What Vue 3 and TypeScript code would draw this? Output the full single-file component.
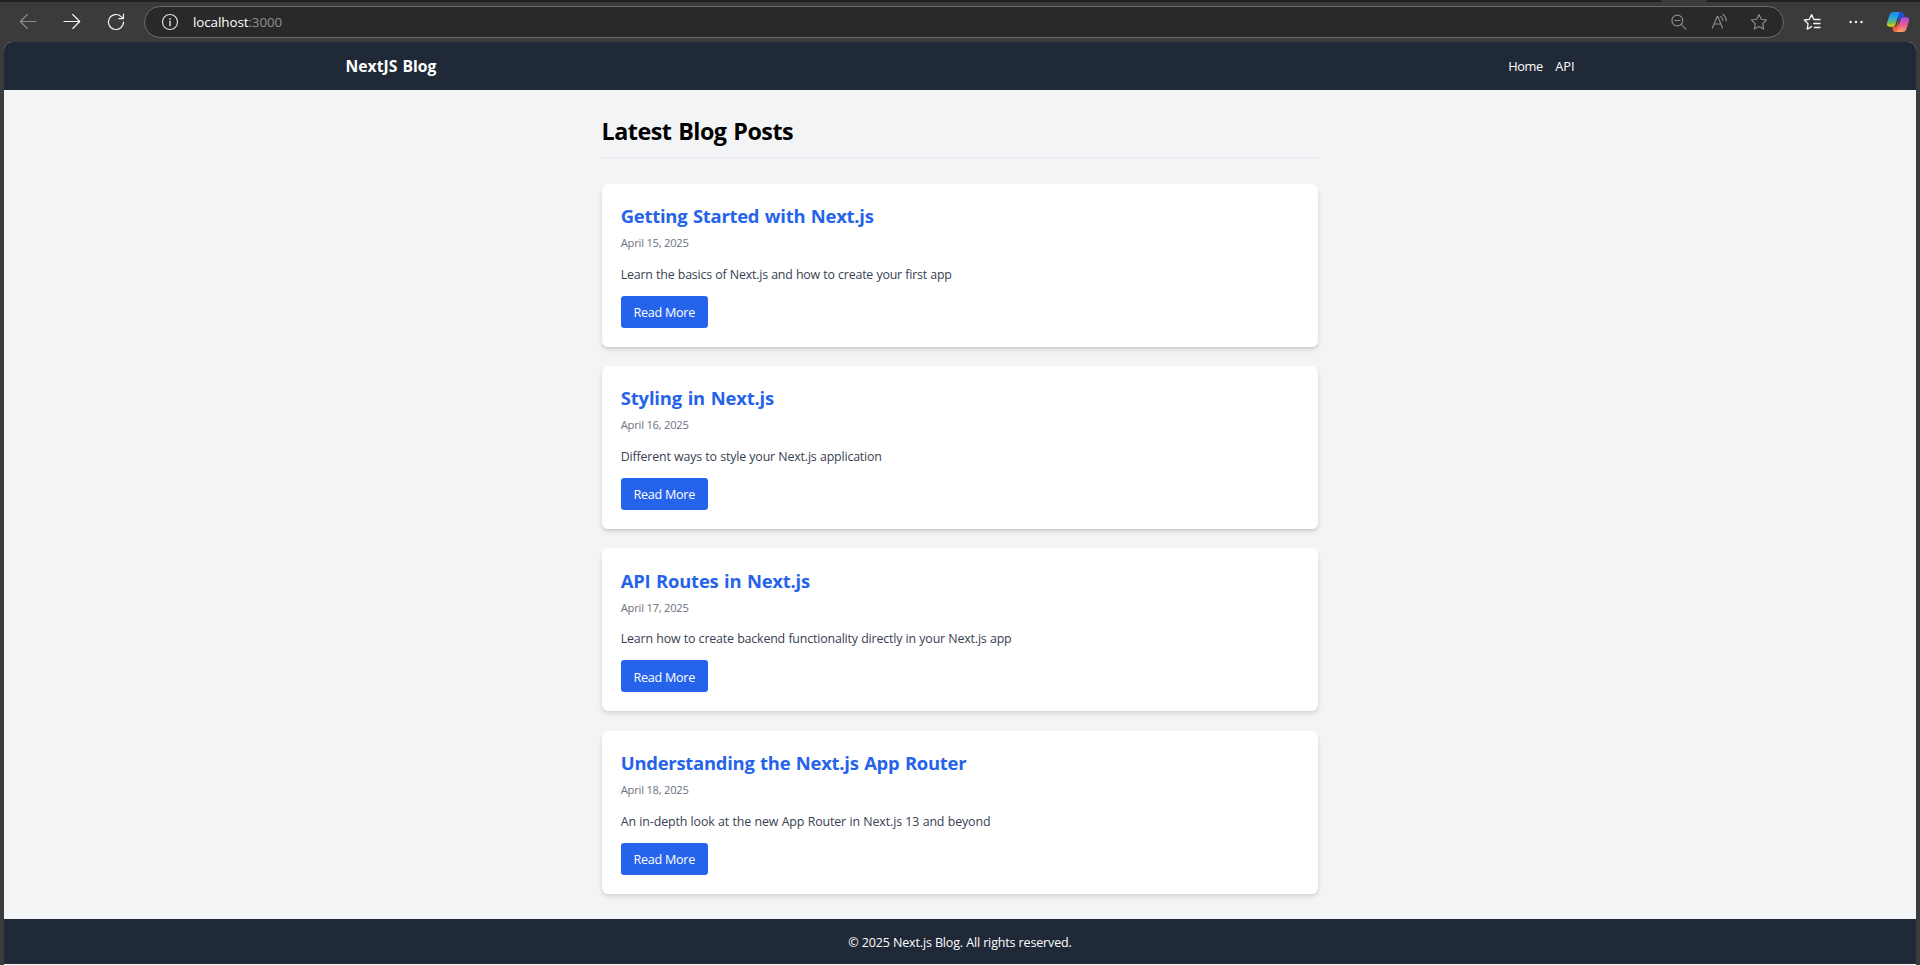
<script setup lang="ts">
interface Post {
  id: number
  title: string
  date: string
  excerpt: string
}

const posts: Post[] = [
  {
    id: 1,
    title: 'Getting Started with Next.js',
    date: 'April 15, 2025',
    excerpt: 'Learn the basics of Next.js and how to create your first app',
  },
  {
    id: 2,
    title: 'Styling in Next.js',
    date: 'April 16, 2025',
    excerpt: 'Different ways to style your Next.js application',
  },
  {
    id: 3,
    title: 'API Routes in Next.js',
    date: 'April 17, 2025',
    excerpt: 'Learn how to create backend functionality directly in your Next.js app',
  },
  {
    id: 4,
    title: 'Understanding the Next.js App Router',
    date: 'April 18, 2025',
    excerpt: 'An in-depth look at the new App Router in Next.js 13 and beyond',
  },
]
</script>

<template>
  <div class="window">
    <div class="tabstrip"><span class="active-tab"></span></div>
    <div class="toolbar">
      <span class="tool dim">
        <svg width="20" height="20" viewBox="0 0 20 20"><path d="M18 9.5H2.3M9.3 2.5l-7 7 7 7" /></svg>
      </span>
      <span class="tool">
        <svg width="20" height="20" viewBox="0 0 20 20"><path d="M2 9.5h15.7M10.7 2.5l7 7-7 7" /></svg>
      </span>
      <span class="tool">
        <svg width="20" height="20" viewBox="0 0 20 20"><path d="M17.5 10a7.5 7.5 0 1 1-2.3-5.4l1.8 1.9M17.5 2v4.6h-4.7" /></svg>
      </span>
      <div class="address">
        <span class="info">
          <svg width="20" height="20" viewBox="0 0 20 20">
            <circle cx="10" cy="10" r="7.5" />
            <path d="M10 9.2v4.6" stroke-width="1.4" />
            <circle cx="10" cy="6.8" r=".9" class="solid" />
          </svg>
        </span>
        <span class="url">localhost<span class="port">:3000</span></span>
        <span class="tool small dim">
          <svg width="20" height="20" viewBox="0 0 20 20"><circle cx="8.3" cy="8.5" r="5.4" /><path d="M12.2 12.4l4.7 4.7M5.6 8.5H11" /></svg>
        </span>
        <span class="tool small dim">
          <svg width="20" height="20" viewBox="0 0 20 20"><path d="M3.4 16L8.3 4.3h.4L13.5 16M5 12h7M11.6 4.5c1.3.9 2.1 2.3 2.2 4M13.9 2.4c2 1.4 3.3 3.6 3.4 6.4" /></svg>
        </span>
        <span class="tool small dim">
          <svg width="20" height="20" viewBox="0 0 20 20"><path d="M10 2.4l2.3 4.9 5.3.7-3.9 3.7 1 5.4L10 14.5l-4.7 2.6 1-5.4L2.4 8l5.3-.7z" /></svg>
        </span>
      </div>
      <span class="tool">
        <svg width="20" height="20" viewBox="0 0 20 20"><path d="M12.6 7.4h-.8L9.7 2.6 7.4 7.3l-5.1.7 3.8 3.7-.9 5.4 4.4-2.5M12.5 7.5H18M11.7 11.5H18M12.5 15.5H18" stroke-width="1.3" /></svg>
      </span>
      <span class="tool">
        <svg width="20" height="20" viewBox="0 0 20 20"><g class="solid"><circle cx="4.6" cy="10" r="1.2" /><circle cx="10" cy="10" r="1.2" /><circle cx="15.5" cy="10" r="1.2" /></g></svg>
      </span>
      <span class="tool small">
        <svg class="copilot" width="24" height="24" viewBox="0 0 24 24">
          <defs>
            <linearGradient id="cool" x1="0" y1="0" x2="0" y2="1">
              <stop offset="0" stop-color="#168cf0" />
              <stop offset=".4" stop-color="#2aa9dc" />
              <stop offset=".72" stop-color="#6bbb64" />
              <stop offset="1" stop-color="#f4d10c" />
            </linearGradient>
            <linearGradient id="warm" x1="0" y1="0" x2="0" y2="1">
              <stop offset="0" stop-color="#a54ce8" />
              <stop offset=".5" stop-color="#e9588f" />
              <stop offset="1" stop-color="#ffa25c" />
            </linearGradient>
          </defs>
          <path fill="#1a51d8" d="M12 2h3.2c1.5 0 2.1.9 2.6 2.2l1 3.1h-2.6c-1.5 0-2.1.8-2.6 2.2L12 15z" />
          <path fill="#fa6038" d="M6.4 16.7h4l1.6-5.9.6 5.3-1.4 4.6c-.4 1-.9 1.3-1.8 1.3-1.3 0-2-.8-2.4-2.1z" />
          <path fill="url(#cool)" d="M7.5 2h7.2c-1.3.2-1.8 1.1-2.2 2.5L9.4 14.8c-.5 1.4-1.2 1.9-2.6 1.9H3.5c-2.3 0-3-1.6-2.4-3.9L3.6 4.9C4.2 3 5.5 2 7.5 2z" />
          <path fill="url(#warm)" d="M16.5 22H9.3c1.3-.2 1.8-1.1 2.2-2.5l3.1-10.3c.5-1.4 1.2-1.9 2.6-1.9h3.3c2.3 0 3 1.6 2.4 3.9l-2.5 7.9c-.6 1.9-1.9 2.9-3.9 2.9z" />
        </svg>
      </span>
    </div>

    <div class="page">
      <header class="site-header">
        <div class="header-inner">
          <a class="brand">NextJS Blog</a>
          <nav class="nav"><a>Home</a><a class="api">API</a></nav>
        </div>
      </header>

      <main class="main">
        <h1 class="heading">Latest Blog Posts</h1>
        <div class="posts">
          <article v-for="post in posts" :key="post.id" class="card">
            <h2 class="title">{{ post.title }}</h2>
            <p class="date">{{ post.date }}</p>
            <p class="excerpt">{{ post.excerpt }}</p>
            <a class="button">Read More</a>
          </article>
        </div>
      </main>

      <footer class="site-footer">© 2025 Next.js Blog. All rights reserved.</footer>
    </div>
  </div>
</template>

<style>
body {
  background: #3b3b3b;
  overflow: hidden;
}
</style>

<style scoped>
.window {
  box-sizing: border-box;
  width: 1920px;
  height: 965px;
  display: flex;
  flex-direction: column;
  background: #3b3b3b;
  font-family: "Segoe UI", "Open Sans", "Noto Sans", sans-serif;
  font-size: 12.8px;
  line-height: 19.2px;
}
.tabstrip {
  flex: none;
  height: 2px;
  display: flex;
  background: #202020;
}
.active-tab {
  width: 46px;
  margin-left: 1661px;
  background: #3b3b3b;
}
.toolbar {
  flex: none;
  height: 40px;
  display: flex;
  align-items: center;
  padding: 0 2px 0 6px;
  box-sizing: border-box;
}
.tool {
  flex: none;
  width: 44px;
  display: flex;
  justify-content: center;
  color: #f4f4f4;
}
.tool.small {
  width: 40px;
}
.tool.dim {
  color: #8c8c8c;
}
svg {
  display: block;
  fill: none;
  stroke: currentColor;
  stroke-width: 1.15;
  stroke-linecap: round;
  stroke-linejoin: round;
}
.solid {
  fill: currentColor;
  stroke: none;
}
.copilot {
  stroke: none;
}
.address {
  flex: 1;
  box-sizing: border-box;
  height: 32px;
  margin: 0 6px;
  padding: 0 4px 0 15px;
  display: flex;
  align-items: center;
  border: 1px solid #6b6b6b;
  border-radius: 16px;
  background: #292929;
}
.info {
  color: #e0e0e0;
}
.url {
  flex: 1;
  margin-left: 13px;
  padding-top: 1.4px;
  font-size: 13.4px;
  letter-spacing: -0.08px;
  color: #fff;
}
.port {
  color: #8f8f8f;
}
.page {
  flex: 1;
  margin: 0 4px;
  display: flex;
  flex-direction: column;
  background: #f3f4f6;
  border-radius: 8px 8px 0 0;
  overflow: hidden;
}
.site-header {
  flex: none;
  box-sizing: border-box;
  height: 48px;
  padding-top: 2px;
  background: #1f2937;
  color: #fff;
}
.header-inner {
  width: 1228.8px;
  height: 100%;
  margin: 0 auto;
  display: flex;
  align-items: center;
  justify-content: space-between;
}
.brand {
  font-size: 15.7px;
  font-weight: 700;
  word-spacing: 1px;
}
.nav {
  display: flex;
  gap: 12.6px;
  letter-spacing: -0.4px;
}
.api {
  letter-spacing: -0.1px;
}
.main {
  flex: 1;
  box-sizing: border-box;
  width: 716.8px;
  margin: 0 auto;
  padding-top: 25.6px;
}
.heading {
  margin: 0 0 25.6px;
  padding: 1px 0 11.4px;
  border-bottom: 1px solid #e5e7eb;
  font-size: 23.3px;
  line-height: 29px;
  font-weight: 700;
  letter-spacing: -0.5px;
  word-spacing: 1.2px;
  color: #000;
}
.posts {
  display: flex;
  flex-direction: column;
  gap: 19.4px;
}
.card {
  box-sizing: border-box;
  height: 163px;
  padding: 19.2px;
  border-radius: 6.4px;
  background: #fff;
  box-shadow: 0 3.2px 4.8px -0.8px rgba(0, 0, 0, 0.1), 0 1.6px 3.2px -1.6px rgba(0, 0, 0, 0.1);
}
.title {
  margin: 0 0 6.3px;
  padding-top: 0.1px;
  font-size: 18.4px;
  line-height: 25.6px;
  font-weight: 700;
  letter-spacing: -0.24px;
  word-spacing: 1px;
  color: #2563eb;
}
.card:nth-child(2) .title {
  letter-spacing: -0.15px;
}
.card:nth-child(3) .title {
  letter-spacing: -0.2px;
}
.date {
  margin: 0 0 13.8px;
  font-size: 11.2px;
  line-height: 16px;
  letter-spacing: -0.24px;
  color: #6b7280;
}
.excerpt {
  margin: 0 0 11.8px;
  font-size: 12.4px;
  letter-spacing: -0.2px;
  word-spacing: 0.3px;
  color: #374151;
}
.card:nth-child(2) .excerpt,
.card:nth-child(3) .excerpt {
  letter-spacing: -0.17px;
}
.card:nth-child(4) .excerpt {
  letter-spacing: -0.125px;
}
.button {
  box-sizing: border-box;
  display: flex;
  align-items: center;
  justify-content: center;
  width: 87px;
  height: 32px;
  padding-top: 1.6px;
  border-radius: 3.2px;
  background: #2563eb;
  color: #fff;
  font-size: 12.6px;
  letter-spacing: -0.26px;
}
.site-footer {
  flex: none;
  box-sizing: border-box;
  height: 45px;
  padding-top: 2px;
  margin-bottom: 1px;
  display: flex;
  align-items: center;
  justify-content: center;
  background: #1f2937;
  color: #fff;
  font-size: 12.5px;
  letter-spacing: -0.15px;
  word-spacing: 0.1px;
}
</style>
